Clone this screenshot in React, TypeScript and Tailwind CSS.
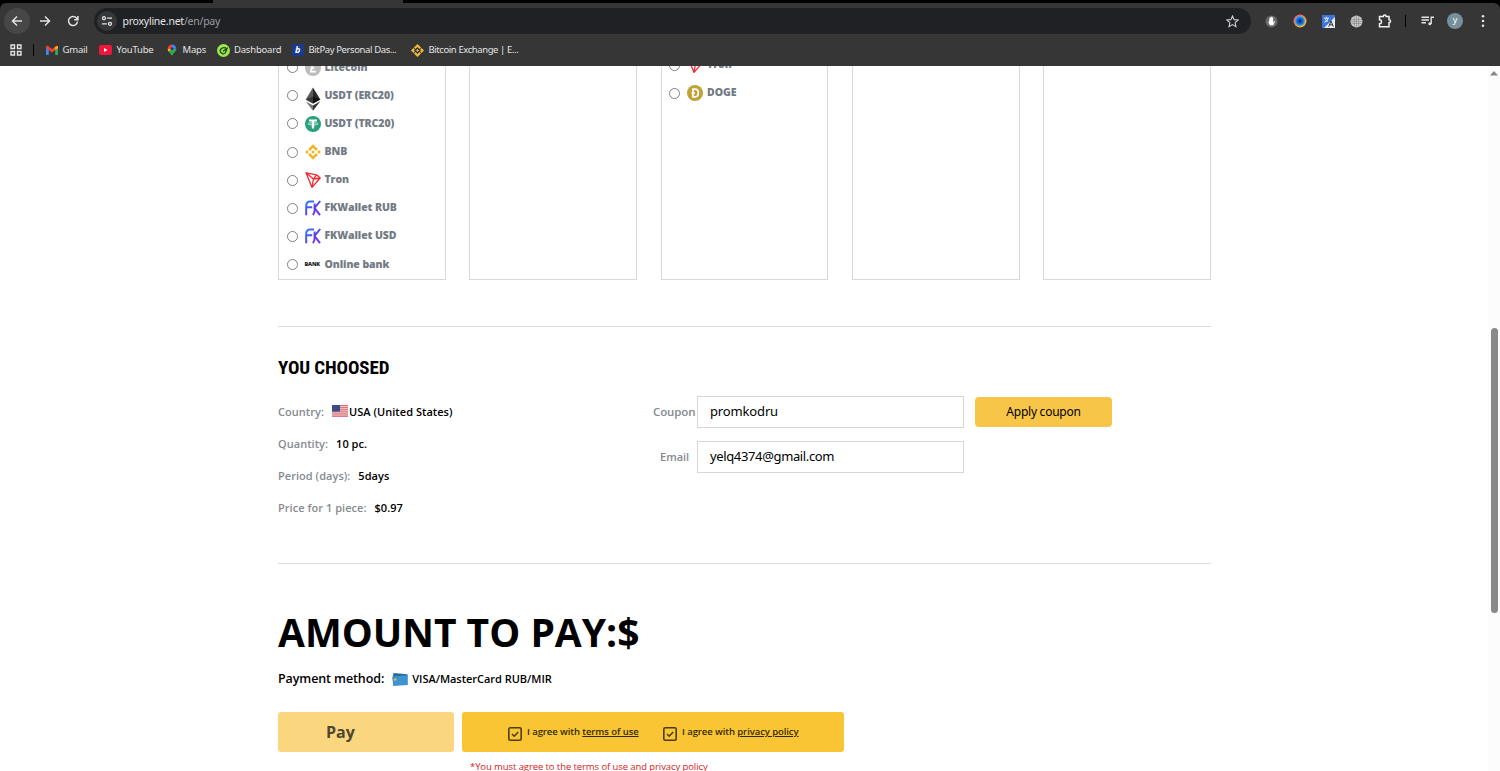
import type { ReactNode } from 'react';
import { clsx } from 'clsx';

const LitecoinIcon = () => (
  <svg viewBox="0 0 16 16" className="w-4 h-4">
    <circle cx="8" cy="8" r="8" fill="#bcbcbc" />
    <path d="M8 3.2 6.6 8.6 5.2 9.1M6.6 8.6 5.9 11.6h5M6.6 8.6l2.6-1" fill="none" stroke="#fff" strokeWidth="1.7" />
  </svg>
);

const EthIcon = () => (
  <svg viewBox="0 0 16 24" className="w-4 h-6 relative top-[3px]">
    <path d="M8 .5.7 12.500 8 16.500z" fill="#5a5a5a" />
    <path d="M8 .5 15.300 12.500 8 16.500z" fill="#2b2b2b" />
    <path d="M8 9.500.7 12.500 8 16.500z" fill="#3a3a3a" />
    <path d="M8 9.500 15.300 12.500 8 16.500z" fill="#111" />
    <path d="M.7 14.200 8 23.800v-5.200z" fill="#777" />
    <path d="M15.300 14.200 8 23.800v-5.200z" fill="#333" />
  </svg>
);

const TetherIcon = () => (
  <svg viewBox="0 0 16 16" className="w-4 h-4">
    <circle cx="8" cy="8" r="8" fill="#26a17b" />
    <path d="M4 3.4h8v2.2H9.2V12.5H6.8V5.600H4z" fill="#fff" />
    <ellipse cx="8" cy="7.800" rx="5" ry="1.100" fill="none" stroke="#fff" strokeWidth=".7" />
  </svg>
);

const BnbIcon = () => (
  <svg viewBox="0 0 16 16" className="w-4 h-4">
    <g fill="#edb72e">
      <path d="M8 .2 12.900 5.100 11 7 8 4 5 7 3.100 5.100z" />
      <path d="M8 15.800 3.100 10.900 5 9 8 12 11 9 12.900 10.900z" />
      <path d="M8 6.100 9.900 8 8 9.900 6.100 8z" />
      <path d="M2 6.100 3.900 8 2 9.900.1 8z" />
      <path d="M14 6.100 15.900 8 14 9.900 12.100 8z" />
    </g>
  </svg>
);

const BinanceIcon = () => (
  <svg viewBox="0 0 12 12" className="w-[13px] h-[13px] shrink-0">
    <g fill="#f0b93a">
      <path d="M6 0 9.300 3.300 7.900 4.700 6 2.800 4.100 4.700 2.700 3.300z" />
      <path d="M6 12 2.700 8.700 4.100 7.300 6 9.200 7.900 7.300 9.300 8.700z" />
      <path d="M2.200 3.800 3.600 5.200 2.800 6l.8.8-1.400 1.400L0 6z" />
      <path d="M9.800 3.800 8.400 5.200 9.200 6l-.8.8 1.400 1.400L12 6z" />
      <path d="M6 4.600 7.400 6 6 7.400 4.600 6z" />
    </g>
  </svg>
);

const TronIcon = () => (
  <svg viewBox="0 0 16 16" className="w-4 h-4">
    <path d="M1 .8 11.600 2.800 15.200 6 7 15.400zM1 .8l7.400 6.200 6.800-1M8.400 7 11.600 2.800M8.400 7 7 15.400" fill="none" stroke="#ef2b31" strokeWidth="1.300" strokeLinejoin="round" />
  </svg>
);

const FkIcon = () => (
  <svg viewBox="0 0 16 16" className="w-4 h-4">
    <defs>
      <linearGradient id="fk" x1="0" y1="0" x2="16" y2="16" gradientUnits="userSpaceOnUse">
        <stop offset="0" stopColor="#2c8cf0" />
        <stop offset=".5" stopColor="#5346ee" />
        <stop offset="1" stopColor="#8428f5" />
      </linearGradient>
    </defs>
    <g fill="none" stroke="url(#fk)" strokeWidth="2">
      <path d="M1.200 15.200V6Q1.200 1.400 5 1.400H9M1.200 7.200H7.200" />
      <path d="M15.200 1 9.600 8 15 15.200M9.600 3.500V10.500Q9.600 13 7.800 15" />
    </g>
  </svg>
);

const DogeIcon = () => (
  <svg viewBox="0 0 16 16" className="w-4 h-4">
    <circle cx="8" cy="8" r="8" fill="#bfa238" />
    <path d="M6 4.200h2.200Q11.300 4.300 11.300 8T8.200 11.800H6zM4.400 8H8" fill="none" stroke="#fff" strokeWidth="1.700" />
  </svg>
);

const BankIcon = () => (
  <span className="w-4 font-extrabold text-[5.500px] leading-4 tracking-[-0.15px] text-[#222]">BANK</span>
);

interface Method {
  label: string;
  icon: ReactNode;
}

const methods: Method[] = [
  { label: 'Litecoin', icon: <LitecoinIcon /> },
  { label: 'USDT (ERC20)', icon: <EthIcon /> },
  { label: 'USDT (TRC20)', icon: <TetherIcon /> },
  { label: 'BNB', icon: <BnbIcon /> },
  { label: 'Tron', icon: <TronIcon /> },
  { label: 'FKWallet RUB', icon: <FkIcon /> },
  { label: 'FKWallet USD', icon: <FkIcon /> },
  { label: 'Online bank', icon: <BankIcon /> },
];

const otherMethods: Method[] = [
  { label: 'Tron', icon: <TronIcon /> },
  { label: 'DOGE', icon: <DogeIcon /> },
];

const MethodRow = ({ label, icon }: Method) => (
  <label className="flex items-center h-[28.1px] shrink-0 pl-[7.500px] whitespace-nowrap">
    <span className="w-[11px] h-[11px] rounded-full border border-[#808080] shrink-0" />
    <span className="ml-[7px] w-4 flex items-center justify-center shrink-0">{icon}</span>
    <span className="ml-[4px] text-[10.500px] font-extrabold text-[#737b84] tracking-[-0.08px]">{label}</span>
  </label>
);

const Bookmark = ({ icon, label, className }: { icon: ReactNode; label: string; className?: string }) => (
  <div className={clsx('flex items-center shrink-0 whitespace-nowrap', className)}>
    <span className="w-[13px] mr-[4.500px] flex justify-center shrink-0">{icon}</span>
    {label}
  </div>
);

const Browser = () => (
  <header className="h-[66px] shrink-0 bg-black text-[#e3e3e3] font-['Noto_Sans',sans-serif]">
    <div className="h-[3px] pl-[213px]">
      <div className="w-[190px] h-[3px] bg-[#363636]" />
    </div>
    <div className="h-[63px] bg-[#363636] rounded-t-md">
      <div className="h-[36px] flex items-center pl-1">
        <div className="w-[26px] h-[26px] rounded-full bg-[#474747] flex items-center justify-center">
          <svg viewBox="0 0 12 12" className="w-3 h-3" fill="none" stroke="currentColor" strokeWidth="1.500"><path d="M11 6H1.700M6 1.500 1.500 6 6 10.500" /></svg>
        </div>
        <svg viewBox="0 0 12 12" className="w-3 h-3 ml-[9px]" fill="none" stroke="currentColor" strokeWidth="1.500"><path d="M1 6h9.300M6 1.500 10.500 6 6 10.500" /></svg>
        <svg viewBox="0 0 12 12" className="w-3 h-3 ml-[16px]" fill="none" stroke="currentColor" strokeWidth="1.500"><path d="M10.500 6.500A4.500 4.500 0 1 1 9.400 3L10.700 4.300M10.900 1v3.700H7.200" /></svg>
        <div className="ml-[15px] w-[1157px] h-[26px] rounded-full bg-[#202124] flex items-center pl-[3px] pr-3">
          <span className="w-5 h-5 rounded-full bg-[#363739] flex items-center justify-center">
            <svg viewBox="0 0 12 12" className="w-3 h-3" fill="none" stroke="currentColor" strokeWidth="1.300"><circle cx="3" cy="3.200" r="1.500" /><path d="M6.200 3.200H11M1 8.800h4.800" /><circle cx="9" cy="8.800" r="1.500" /></svg>
          </span>
          <span className="ml-[5.500px] mt-px text-[10.500px] flex-1 tracking-[-0.24px]">proxyline.net<span className="text-[#9a9da0]">/en/pay</span></span>
          <svg viewBox="0 0 12 12" className="w-[13px] h-[13px]" fill="none" stroke="#d0d0d0" strokeWidth="1"><path d="m6 .9 1.500 3.400 3.700.3-2.800 2.500.8 3.700L6 8.900l-3.200 1.900.8-3.700L.8 4.600l3.700-.3z" /></svg>
        </div>
        <svg viewBox="0 0 14 14" className="w-[13px] h-[13px] ml-[14px]"><circle cx="7" cy="7" r="6.500" fill="#686868" /><path d="M4.600 6.200V3.400h1V2.500h1.100V2h1.100v.7h1v6L9.900 6.500l.9.500-1.800 4H5.300L3.600 8z" fill="#fff" /></svg>
        <svg viewBox="0 0 14 14" className="w-[14px] h-[14px] ml-[15px]">
          <defs>
            <linearGradient id="ring" x1="0" y1="0" x2="1" y2="1"><stop stopColor="#e84aa0" /><stop offset=".5" stopColor="#ff8a30" /><stop offset="1" stopColor="#ffd13b" /></linearGradient>
          </defs>
          <circle cx="7" cy="7" r="6.500" fill="url(#ring)" />
          <circle cx="7" cy="7" r="5" fill="#36a9f2" /><circle cx="7" cy="7" r="3.800" fill="#1269d8" /><circle cx="7" cy="7" r="1.700" fill="#082b77" />
        </svg>
        <svg viewBox="0 0 13 13" className="w-[13px] h-[13px] ml-[15px]">
          <path d="M0 0h13v13H0z" fill="#3975da" /><path d="M13 2v11H2z" fill="#e8edf4" />
          <path d="M2 3.200h5M4.500 1.800v1.400M6.200 3.200Q5.500 6 2.200 7.500M3 4.600l3 2" stroke="#fff" fill="none" strokeWidth=".9" />
          <path d="M6.700 11.700 9 6l2.300 5.700M7.500 9.800h3" fill="none" stroke="#333" />
        </svg>
        <svg viewBox="0 0 13 13" className="w-[13px] h-[13px] ml-[15px]"><circle cx="6.500" cy="6.500" r="6" fill="#c9c9c9" /><path d="M1 4.500h11M1 8.500h11M4.300 1v11M8.700 1v11M6.500 0v13M0 6.500h13" stroke="#888" strokeWidth=".6" /></svg>
        <svg viewBox="0 0 14 14" className="w-[14px] h-[14px] ml-[15px]" fill="none" stroke="#f0f0f0" strokeWidth="1.500"><path d="M1.500 2.500H5.300a1.400 1.400 0 0 1 2.800 0H11V5.800a1.500 1.500 0 0 1 0 3V12.700H1.500V9.800a2 2 0 0 0 0-4z" /></svg>
        <span className="w-px h-3 bg-black ml-[13px]" />
        <svg viewBox="0 0 13 12" className="w-[13px] h-3 ml-[15px]" fill="none" stroke="currentColor" strokeWidth="1.400"><path d="M.5 2.200h7.500M.5 5h7.500M.5 7.800h4.500M10.200 9V2.200H13" /><circle cx="8.800" cy="8.800" r="1.500" fill="currentColor" stroke="none" /></svg>
        <span className="w-4 h-4 rounded-full bg-[#78909c] text-[9px] leading-[14px] text-center text-white ml-[13px]">y</span>
        <svg viewBox="0 0 4 14" className="w-1 h-[14px] ml-[18px]" fill="currentColor"><circle cx="2" cy="2.300" r="1.300" /><circle cx="2" cy="7" r="1.300" /><circle cx="2" cy="11.700" r="1.300" /></svg>
      </div>
      <nav className="h-[22px] flex items-center pl-[10px] text-[9.500px] tracking-[-0.2px]">
        <svg viewBox="0 0 12 12" className="w-3 h-3" fill="none" stroke="currentColor" strokeWidth="1.400"><path d="M1 1h3.500v3.500H1zM7.500 1H11v3.500H7.500zM1 7.500h3.500V11H1zM7.500 7.500H11V11H7.500z" /></svg>
        <span className="w-px h-3 bg-black ml-[11px]" />
        <Bookmark
          className="ml-[11px] w-[54px]"
          label="Gmail"
          icon={<svg viewBox="0 0 12 10" className="w-3 h-[10px]"><path d="M0 1.500V10h2.800V4z" fill="#4285f4" /><path d="M12 1.500V10H9.200V4z" fill="#34a853" /><path d="m0 1.500 1.500-1L6 4l4.500-3.500L12 1.500V3L6 7.500 0 3z" fill="#ea4335" /><path d="M9.200 2 12 1v2L9.200 5z" fill="#fbbc04" /></svg>}
        />
        <Bookmark
          className="w-[66px]"
          label="YouTube"
          icon={<svg viewBox="0 0 13 10" className="w-[13px] h-[10px]"><rect width="13" height="10" rx="2" fill="#f5143c" /><path d="M5 3v4l3.500-2z" fill="#fff" /></svg>}
        />
        <Bookmark
          className="w-[51.500px]"
          label="Maps"
          icon={<svg viewBox="0 0 10 13" className="w-[10px] h-[13px]"><path d="M5 .5A4.300 4.300 0 0 0 .7 4.800L5 5z" fill="#ea4335" /><path d="M5 .5a4.300 4.300 0 0 1 4.300 4.300L5 5z" fill="#4285f4" /><path d="M.7 4.800c0 1.400.6 2.300 1.300 3.200L5 5z" fill="#fbbc04" /><path d="M9.300 4.800C9.300 8.500 5.800 8.800 5 12.500 4.600 10.300 3 9.300 2 8l3-3z" fill="#34a853" /><circle cx="5" cy="4.700" r="1.500" fill="#1f3f7a" /></svg>}
        />
        <Bookmark
          className="w-[74.500px]"
          label="Dashboard"
          icon={<svg viewBox="0 0 13 13" className="w-[13px] h-[13px]"><circle cx="6.500" cy="6.500" r="6.500" fill="#9be84a" /><path d="M9.500 4.300Q6 2.800 4 5T4.500 9 8.500 8.500L10 4.500 6 7.200" fill="none" stroke="#1d3c18" strokeWidth="1.200" /></svg>}
        />
        <Bookmark
          className="w-[120px] tracking-[-0.39px]"
          label="BitPay Personal Das..."
          icon={<span className="w-3 h-3 bg-[#1a3b8b] rounded-[1px] text-white italic font-bold text-[9px] leading-[12px] text-center">b</span>}
        />
        <Bookmark className="tracking-[-0.41px]" label="Bitcoin Exchange | E..." icon={<BinanceIcon />} />
      </nav>
    </div>
  </header>
);

const Check = () => (
  <svg viewBox="0 0 14 14" className="w-[14px] h-[14px] shrink-0 relative top-[1.500px]" fill="none" stroke="#4a3d12" strokeWidth="1.600">
    <rect x=".8" y=".8" width="12.400" height="12.400" rx="1.500" />
    <path d="m4 7 2.200 2.200 4-4.200" />
  </svg>
);

const UsaFlag = () => (
  <svg viewBox="0 0 16 12" className="w-4 h-3">
    <path d="M0 0h16v12H0z" fill="#f3d5d8" />
    <path d="M0 .5h16M0 2.400h16M0 4.300h16M0 6.200h16M0 8.100h16M0 10h16M0 11.700h16" stroke="#d9616c" strokeWidth=".95" />
    <path d="M0 0h8v6.600H0z" fill="#3b4d86" />
  </svg>
);

const CardIcon = () => (
  <svg viewBox="0 0 16 13" className="w-4 h-[13px]">
    <path d="m1.500 0 14 1.200-.5 4L.5 6z" fill="#276c9e" />
    <path d="M.3 3.500 15.800 2.300v9.700L1.200 13z" fill="#3d94d1" />
    <path d="M2 5.500h2.500v2H2z" fill="#e5bd55" />
  </svg>
);

const Detail = ({ label, children }: { label: string; children: ReactNode }) => (
  <div className="h-8 flex items-center text-[11px] font-semibold tracking-[0.04px]">
    <span className="text-[#868a90]">{label}</span>
    <span className="ml-2 flex items-center text-black">{children}</span>
  </div>
);

export default function App() {
  return (
    <div className="w-[1500px] h-[771px] overflow-hidden flex flex-col bg-white font-['Open_Sans',sans-serif] text-black">
      <Browser />
      <div className="flex-1 min-h-0 flex">
        <main className="ml-[278px] w-[933px] h-[705px] overflow-hidden flex flex-col">
          <section className="grid grid-cols-5 gap-[23.500px] h-[214px] shrink-0">
            <div className="border border-t-0 border-[#d9d9d9] h-[214px] overflow-hidden flex flex-col justify-end pb-[0.500px]">
              {methods.map((m) => <MethodRow key={m.label} {...m} />)}
            </div>
            <div className="border border-t-0 border-[#d9d9d9]" />
            <div className="border border-t-0 border-[#d9d9d9] h-[214px] overflow-hidden">
              <div className="-mt-[15px] flex flex-col">
                {otherMethods.map((m) => <MethodRow key={m.label} {...m} />)}
              </div>
            </div>
            <div className="border border-t-0 border-[#d9d9d9]" />
            <div className="border border-t-0 border-[#d9d9d9]" />
          </section>

          {/* Order summary */}
          <section className="mt-[46px] h-[238px] shrink-0 border-y border-[#dcdcdc]">
            <h2 className="mt-[29px] h-6 text-[19px] leading-6 font-bold tracking-[-0.1px] whitespace-nowrap font-['Roboto_Condensed',Roboto,sans-serif]">
              YOU CHOOSED
            </h2>
            <div className="flex mt-[16px]">
              <div className="w-[375px]">
                <Detail label="Country:"><span className="mr-px -mt-[3px]"><UsaFlag /></span>USA (United States)</Detail>
                <Detail label="Quantity:">10 pc.</Detail>
                <Detail label="Period (days):">5days</Detail>
                <Detail label="Price for 1 piece:">$0.97</Detail>
              </div>
              <div>
                <div className="flex items-center h-8">
                  <label className="w-[44px] text-[11.500px] font-semibold tracking-[-0.1px] text-[#868a90]">Coupon</label>
                  <div className="w-[267px] h-8 border border-[#d6d6d6] flex items-center pl-3 text-[13px] tracking-[-0.15px] font-['Noto_Sans',sans-serif]">promkodru</div>
                  <button className="ml-[11px] w-[137px] h-[30px] rounded-[4px] bg-[#f7c548] text-[12px] tracking-[-0.25px] font-['Noto_Sans',sans-serif]">Apply coupon</button>
                </div>
                <div className="flex items-center h-8 mt-[13px]">
                  <label className="w-[37px] ml-[7px] text-[11px] font-semibold text-[#868a90]">Email</label>
                  <div className="w-[267px] h-8 border border-[#d6d6d6] flex items-center pl-3 text-[13px] tracking-[-0.36px] font-['Noto_Sans',sans-serif]">yelq4374@gmail.com</div>
                </div>
              </div>
            </div>
          </section>

          {/* Payment */}
          <section className="shrink-0">
            <h1 className="mt-[40px] h-14 text-[39px] leading-[56px] font-bold whitespace-nowrap">AMOUNT TO PAY:$</h1>
            <div className="mt-[9px] h-5 flex items-center font-semibold">
              <span className="text-[12.500px] tracking-[-0.1px]">Payment method:</span>
              <span className="ml-[8px] mr-[4px]"><CardIcon /></span>
              <span className="text-[11px] tracking-[-0.03px]">VISA/MasterCard RUB/MIR</span>
            </div>
            <div className="mt-[23px] flex gap-2">
              <button className="w-[176px] h-10 rounded-[3px] bg-[#fad77f] text-left pl-12 text-[16px] font-bold text-[#4d472f]">Pay</button>
              <div className="w-[382px] h-10 rounded-[3px] bg-[#f9c535] flex items-center pl-[46px] pt-px text-[9.500px] tracking-[-0.08px] font-semibold text-[#332a0c]">
                <Check />
                <span className="ml-[5px] w-[136px]">I agree with <span className="underline">terms of use</span></span>
                <Check />
                <span className="ml-[5px]">I agree with <span className="underline">privacy policy</span></span>
              </div>
            </div>
            <p className="ml-[192px] mt-[8px] text-[9.500px] leading-[14px] tracking-[-0.09px] font-medium text-[#d71920] whitespace-nowrap">*You must agree to the terms of use and privacy policy</p>
          </section>
        </main>
        <div className="ml-auto w-3 bg-[#fcfcfc] flex flex-col items-center">
          <svg viewBox="0 0 8 5" className="w-2 h-[5px] mt-[5px]"><path d="M4 0 8 4.500H0z" fill="#858585" /></svg>
          <div className="w-[7px] h-[285px] rounded-full bg-[#898989] mt-[252px]" />
        </div>
      </div>
    </div>
  );
}
